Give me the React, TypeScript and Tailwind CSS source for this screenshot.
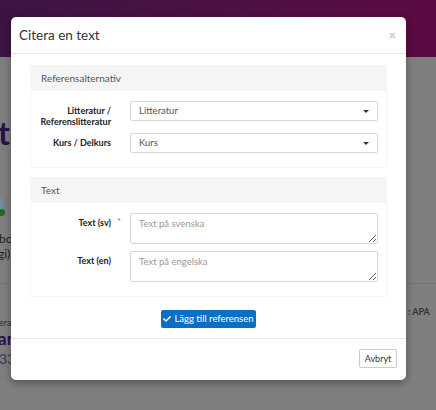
import React from "react";

const font = { fontFamily: "Lato, 'Open Sans', sans-serif" };

function Caret() {
  return (
    <svg width="6" height="3" viewBox="0 0 6 3" className="shrink-0">
      <path d="M0 0 L6 0 L3 3 Z" fill="#333" />
    </svg>
  );
}

function FakeSelect({ value }: { value: string }) {
  return (
    <div className="flex h-[20px] w-[248px] items-center justify-between rounded-[2px] border border-[#d6d6d6] bg-white pl-[8px] pr-[8px] text-[9.5px] text-[#555]">
      <span>{value}</span>
      <Caret />
    </div>
  );
}

const labelCls = "w-[80px] shrink-0 pt-[4px] text-right text-[9px] font-bold leading-[11px] text-[#222]";
const areaCls =
  "ml-[19px] h-[31px] w-[248px] resize-y rounded-[2px] border border-[#d6d6d6] px-[8px] py-[3px] text-[9.5px] leading-[14px] text-[#555] placeholder:text-[#999] outline-none";

export default function App() {
  return (
    <div className="relative h-[410px] w-[436px] overflow-hidden bg-[#7f7f7f]" style={font}>
      {/* background page (dimmed) */}
      <div className="h-[57px] w-full bg-gradient-to-r from-[#3c1443] to-[#5c0942]" />
      <div className="absolute left-0 top-[283px] h-[1px] w-full bg-[#767676]" />
      <div className="absolute left-[-2px] top-[117px] text-[32px] font-bold leading-none text-[#2a1249]">te</div>
      <div className="absolute left-0 top-[199px] h-[12px] w-[3px] bg-[#6f8f9f]" />
      <div className="absolute left-[-2px] top-[209px] h-[7px] w-[7px] rounded-full bg-[#1f6a1f]" />
      <div className="absolute left-[-1px] top-[231px] text-[12px] leading-[15px] text-[#1e1e1e]">bo</div>
      <div className="absolute left-[-2px] top-[246px] text-[12px] leading-[15px] text-[#1e1e1e]">gi)</div>
      <div className="absolute left-[-1px] top-[317px] text-[9px] leading-[12px] text-[#333]">era</div>
      <div className="absolute left-[-2px] top-[329px] text-[17px] font-bold leading-[20px] text-[#2a1249]">an</div>
      <div className="absolute left-[-1px] top-[350px] text-[14px] leading-[17px] text-[#3a3450]">33</div>
      <div className="absolute left-[408px] top-[306px] text-[9px] font-bold leading-[12px] text-[#333]">: APA</div>

      {/* modal */}
      <div className="absolute left-[11px] top-[17px] flex h-[363px] w-[395px] flex-col rounded-[5px] bg-white shadow-[0_3px_9px_rgba(0,0,0,0.35)]">
        <div className="flex h-[37px] items-center justify-between border-b border-[#e5e5e5] pl-[8px] pr-[10px]">
          <span className="text-[13.5px] text-[#333]">Citera en text</span>
          <span className="text-[13px] font-bold leading-none text-[#c9c9c9]">×</span>
        </div>

        <div className="flex flex-col px-[19px] pt-[11px]">
          {/* panel 1 */}
          <div className="border border-t-0 border-[#f6f6f6]">
            <div className="flex h-[26px] items-center bg-[#f5f5f5] pl-[10px] text-[10px] text-[#555]">
              Referensalternativ
            </div>
            <div className="flex flex-col gap-[12px] pb-[14px] pt-[10px]">
              <div className="flex h-[20px] items-start">
                <div className={labelCls}>
                  Litteratur /<br />Referenslitteratur
                </div>
                <div className="ml-[19px]">
                  <FakeSelect value="Litteratur" />
                </div>
              </div>
              <div className="flex h-[20px] items-start">
                <div className={labelCls}>Kurs / Delkurs</div>
                <div className="ml-[19px]">
                  <FakeSelect value="Kurs" />
                </div>
              </div>
            </div>
          </div>

          {/* panel 2 */}
          <div className="mt-[9px] border border-t-0 border-[#f6f6f6]">
            <div className="flex h-[26px] items-center bg-[#f5f5f5] pl-[10px] text-[10px] text-[#555]">Text</div>
            <div className="flex flex-col gap-[7px] pb-[14px] pt-[10px]">
              <div className="flex">
                <div className={labelCls + " relative"}>
                  Text (sv)
                  <span className="absolute right-[-10px] top-[3px] text-[9px] font-normal text-[#e8661d]">*</span>
                </div>
                <textarea placeholder="Text på svenska" className={areaCls} />
              </div>
              <div className="flex">
                <div className={labelCls}>Text (en)</div>
                <textarea placeholder="Text på engelska" className={areaCls} />
              </div>
            </div>
          </div>

          <div className="flex justify-center pb-[10px] pt-[13px]">
            <button className="flex h-[18px] w-[95px] items-center justify-center gap-[3px] whitespace-nowrap rounded-[2px] bg-[#0a6fc2] text-[9.5px] text-white">
              <svg width="8" height="8" viewBox="0 0 512 512">
                <path
                  fill="#fff"
                  d="M173.898 439.404l-166.4-166.4c-9.997-9.997-9.997-26.206 0-36.204l36.203-36.204c9.997-9.998 26.207-9.998 36.204 0L192 312.69 432.095 72.596c9.997-9.997 26.207-9.997 36.204 0l36.203 36.204c9.997 9.997 9.997 26.206 0 36.204l-294.4 294.401c-9.998 9.997-26.207 9.997-36.204-.001z"
                />
              </svg>
              <span>Lägg till referensen</span>
            </button>
          </div>
        </div>

        <div className="flex justify-end border-t border-[#e5e5e5] pr-[9px] pt-[10px]">
          <button className="h-[19px] w-[38px] rounded-[2px] border border-[#ccc] bg-white text-[9px] text-[#333]">
            Avbryt
          </button>
        </div>
      </div>
    </div>
  );
}
